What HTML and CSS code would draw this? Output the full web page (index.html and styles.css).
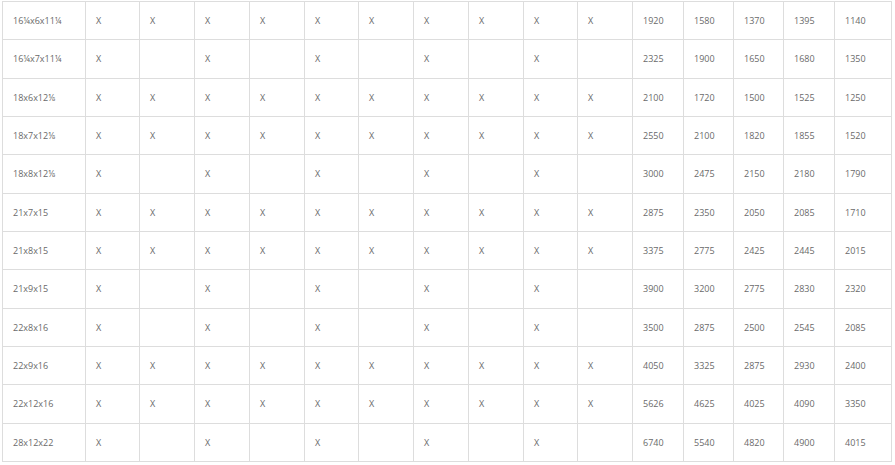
FILE: index.html
```html
<!DOCTYPE html>
<html>
<head>
<meta charset="utf-8">
<link rel="stylesheet" href="styles.css">
</head>
<body>
<div class="wrap">
<table class="grid">
<colgroup>
<col class="c-size">
<col class="c54"><col class="c55"><col class="c55"><col class="c55"><col class="c54"><col class="c55"><col class="c55"><col class="c55"><col class="c54"><col class="c55">
<col class="c51"><col class="c50"><col class="c50"><col class="c51"><col class="c57">
</colgroup>
<tbody>
<tr><td>16¼x6x11¼</td><td>X</td><td>X</td><td>X</td><td>X</td><td>X</td><td>X</td><td>X</td><td>X</td><td>X</td><td>X</td><td>1920</td><td>1580</td><td>1370</td><td>1395</td><td>1140</td></tr>
<tr><td>16¼x7x11¼</td><td>X</td><td></td><td>X</td><td></td><td>X</td><td></td><td>X</td><td></td><td>X</td><td></td><td>2325</td><td>1900</td><td>1650</td><td>1680</td><td>1350</td></tr>
<tr><td>18x6x12⅛</td><td>X</td><td>X</td><td>X</td><td>X</td><td>X</td><td>X</td><td>X</td><td>X</td><td>X</td><td>X</td><td>2100</td><td>1720</td><td>1500</td><td>1525</td><td>1250</td></tr>
<tr><td>18x7x12⅛</td><td>X</td><td>X</td><td>X</td><td>X</td><td>X</td><td>X</td><td>X</td><td>X</td><td>X</td><td>X</td><td>2550</td><td>2100</td><td>1820</td><td>1855</td><td>1520</td></tr>
<tr><td>18x8x12⅛</td><td>X</td><td></td><td>X</td><td></td><td>X</td><td></td><td>X</td><td></td><td>X</td><td></td><td>3000</td><td>2475</td><td>2150</td><td>2180</td><td>1790</td></tr>
<tr><td>21x7x15</td><td>X</td><td>X</td><td>X</td><td>X</td><td>X</td><td>X</td><td>X</td><td>X</td><td>X</td><td>X</td><td>2875</td><td>2350</td><td>2050</td><td>2085</td><td>1710</td></tr>
<tr><td>21x8x15</td><td>X</td><td>X</td><td>X</td><td>X</td><td>X</td><td>X</td><td>X</td><td>X</td><td>X</td><td>X</td><td>3375</td><td>2775</td><td>2425</td><td>2445</td><td>2015</td></tr>
<tr><td>21x9x15</td><td>X</td><td></td><td>X</td><td></td><td>X</td><td></td><td>X</td><td></td><td>X</td><td></td><td>3900</td><td>3200</td><td>2775</td><td>2830</td><td>2320</td></tr>
<tr><td>22x8x16</td><td>X</td><td></td><td>X</td><td></td><td>X</td><td></td><td>X</td><td></td><td>X</td><td></td><td>3500</td><td>2875</td><td>2500</td><td>2545</td><td>2085</td></tr>
<tr><td>22x9x16</td><td>X</td><td>X</td><td>X</td><td>X</td><td>X</td><td>X</td><td>X</td><td>X</td><td>X</td><td>X</td><td>4050</td><td>3325</td><td>2875</td><td>2930</td><td>2400</td></tr>
<tr><td>22x12x16</td><td>X</td><td>X</td><td>X</td><td>X</td><td>X</td><td>X</td><td>X</td><td>X</td><td>X</td><td>X</td><td>5626</td><td>4625</td><td>4025</td><td>4090</td><td>3350</td></tr>
<tr><td>28x12x22</td><td>X</td><td></td><td>X</td><td></td><td>X</td><td></td><td>X</td><td></td><td>X</td><td></td><td>6740</td><td>5540</td><td>4820</td><td>4900</td><td>4015</td></tr>
</tbody>
</table>
</div>
</body>
</html>
```

FILE: styles.css
```css
html, body {
  margin: 0;
  padding: 0;
  background: #ffffff;
}
.wrap {
  padding: 1px 0 0 2px;
}
.grid {
  border-collapse: collapse;
  table-layout: fixed;
  width: 890px;
  font-family: "Open Sans", "Liberation Sans", sans-serif;
  font-size: 9px;
  color: #6a6a6a;
}
.grid td {
  border: 1px solid #dddddd;
  height: 38.33px;
  padding: 0 0 0 10px;
  vertical-align: middle;
  white-space: nowrap;
  overflow: hidden;
  box-sizing: border-box;
}
.c-size { width: 83px; }
.c54 { width: 54px; }
.c55 { width: 55px; }
.c51 { width: 51px; }
.c50 { width: 50px; }
.c57 { width: 57px; }
```
